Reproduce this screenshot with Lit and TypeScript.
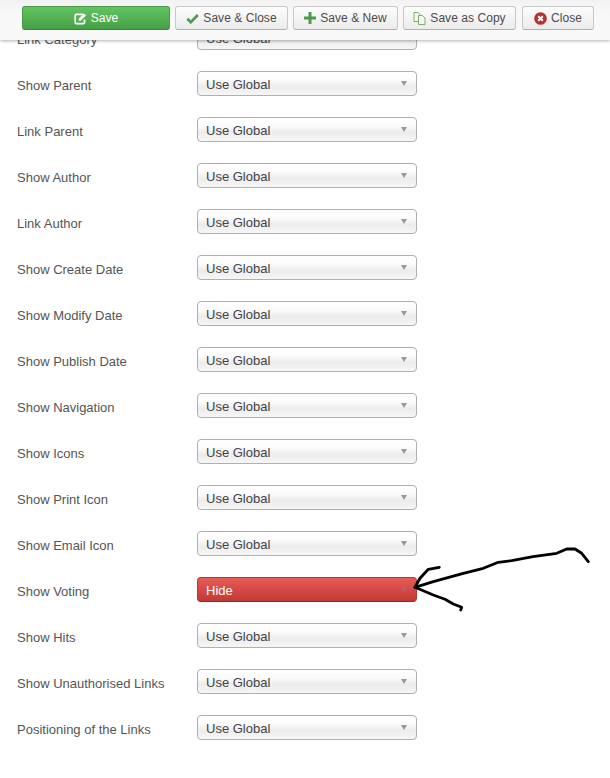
import { LitElement, html, css } from "lit";
import { customElement } from "lit/decorators.js";

const ROWS: [string, string][] = [
  ["Link Category", "Use Global"],
  ["Show Parent", "Use Global"],
  ["Link Parent", "Use Global"],
  ["Show Author", "Use Global"],
  ["Link Author", "Use Global"],
  ["Show Create Date", "Use Global"],
  ["Show Modify Date", "Use Global"],
  ["Show Publish Date", "Use Global"],
  ["Show Navigation", "Use Global"],
  ["Show Icons", "Use Global"],
  ["Show Print Icon", "Use Global"],
  ["Show Email Icon", "Use Global"],
  ["Show Voting", "Hide"],
  ["Show Hits", "Use Global"],
  ["Show Unauthorised Links", "Use Global"],
  ["Positioning of the Links", "Use Global"],
];

@customElement("app-root")
export class AppRoot extends LitElement {
  static styles = css`
    :host {
      display: block;
      position: relative;
      width: 610px;
      height: 778px;
      overflow: hidden;
      background: #fff;
      font-family: "Liberation Sans", Arial, sans-serif;
      font-size: 13px;
      color: #555;
    }
    .toolbar {
      position: absolute;
      top: 0;
      left: 0;
      right: 0;
      height: 40px;
      box-sizing: border-box;
      display: flex;
      align-items: flex-start;
      gap: 5px;
      padding: 6px 0 0 22px;
      background: linear-gradient(#f2f2f2, #f8f8f8 30%, #f8f8f8);
      box-shadow: 0 1px 3px rgba(0, 0, 0, 0.3);
      z-index: 2;
    }
    .btn {
      box-sizing: border-box;
      height: 24px;
      display: flex;
      align-items: center;
      justify-content: center;
      gap: 4px;
      border: 1px solid #c8c8c8;
      border-bottom-color: #b0b0b0;
      border-radius: 3px;
      background: linear-gradient(#fdfdfd, #ebebeb);
      color: #4c4c4c;
      font-size: 12px;
      letter-spacing: 0.05px;
      white-space: nowrap;
    }
    .save {
      width: 148px;
      border-color: #4a9a4a #4a9a4a #3a853a;
      background: linear-gradient(#62c462, #46a046);
      color: #fff;
    }
    .sc { width: 113px; }
    .sn { width: 105px; }
    .cp { width: 113px; }
    .cl { width: 72px; margin-left: 1px; }
    .btn svg { display: block; flex: none; }
    .form {
      display: flex;
      flex-direction: column;
      gap: 21px;
      padding: 25px 0 0 17px;
    }
    .row {
      display: flex;
      align-items: center;
      height: 25px;
    }
    .label {
      width: 180px;
      position: relative;
      top: 2px;
      white-space: nowrap;
    }
    .select {
      box-sizing: border-box;
      width: 220px;
      height: 25px;
      display: flex;
      align-items: center;
      justify-content: space-between;
      padding: 2px 9px 0 8px;
      border: 1px solid #b0b0b0;
      border-radius: 4px;
      background: linear-gradient(#fff 0%, #fbfbfb 35%, #ececec 62%, #f6f6f6 100%);
      color: #444;
    }
    .select.hide {
      border-color: #b33a35;
      border-bottom-color: #8f2a26;
      background: linear-gradient(#e85a56, #c23a35);
      color: #fff;
    }
    .caret {
      width: 0;
      height: 0;
      border-left: 3.5px solid transparent;
      border-right: 3.5px solid transparent;
      border-top: 5px solid #999;
      margin-bottom: 3px;
    }
    .hide .caret { border-top-color: #a86a68; }
    .ink {
      position: absolute;
      left: 0;
      top: 0;
      z-index: 1;
      pointer-events: none;
    }
  `;

  render() {
    return html`
      <div class="form">
        ${ROWS.map(
          ([l, v]) => html`<div class="row">
            <div class="label">${l}</div>
            <div class="select ${v === "Hide" ? "hide" : ""}">
              <span>${v}</span><span class="caret"></span>
            </div>
          </div>`
        )}
      </div>
      <div class="toolbar">
        <div class="btn save">
          <svg width="13" height="13" viewBox="0 0 14 13">
            <path d="M10 2H2.500A1.200 1.200 0 0 0 1.300 3.200v7.600A1.200 1.200 0 0 0 2.500 12h7.600a1.200 1.200 0 0 0 1.200-1.200V7.500" fill="none" stroke="#fff" stroke-width="1.800"/>
            <path d="M5 6.800 10.800 1l2.200 2.200L7.200 9H5z" fill="#fff"/>
          </svg>
          Save
        </div>
        <div class="btn sc">
          <svg width="13" height="11" viewBox="0 0 13 11">
            <path d="M1.300 5.800 4.800 9.200 11.800 2" fill="none" stroke="#4f9d4f" stroke-width="2.800"/>
          </svg>
          Save &amp; Close
        </div>
        <div class="btn sn">
          <svg width="12" height="12" viewBox="0 0 12 12">
            <path d="M4.500 0h3v4.500H12v3H7.500V12h-3V7.500H0v-3h4.500z" fill="#4a9c4a"/>
          </svg>
          Save &amp; New
        </div>
        <div class="btn cp">
          <svg width="13" height="13" viewBox="0 0 13 13" fill="#f4f8f0" stroke="#7ab06a">
            <path d="M1 .5h4l2 2v7H1z"/>
            <path d="M5.500 3.500h4l2.500 2.500v6.500H5.500z"/>
          </svg>
          Save as Copy
        </div>
        <div class="btn cl">
          <svg width="13" height="13" viewBox="0 0 13 13">
            <circle cx="6.500" cy="6.500" r="6.300" fill="#b5322e"/>
            <path d="M4.200 4.200l4.600 4.600M8.800 4.200l-4.600 4.600" stroke="#fff" stroke-width="2"/>
          </svg>
          Close
        </div>
      </div>
      <svg class="ink" width="610" height="778" fill="none" stroke="#000" stroke-width="2.800" stroke-linecap="round" stroke-linejoin="round">
        <path d="M588.300 561.700 581.700 553.300 575 549H566.700L556.700 553.300 533 556.700 511.700 560.700 498.300 562.300 483.300 568.300 463.300 573.300 433.300 581.700 415 587.300"/>
        <path d="M439.300 567.300 428.300 569.300 420 578.300 415 587.300"/>
        <path d="M415 587.300 433.300 595 445 599.300 453.300 604 461.700 607.300 460.700 610"/>
      </svg>
    `;
  }
}
